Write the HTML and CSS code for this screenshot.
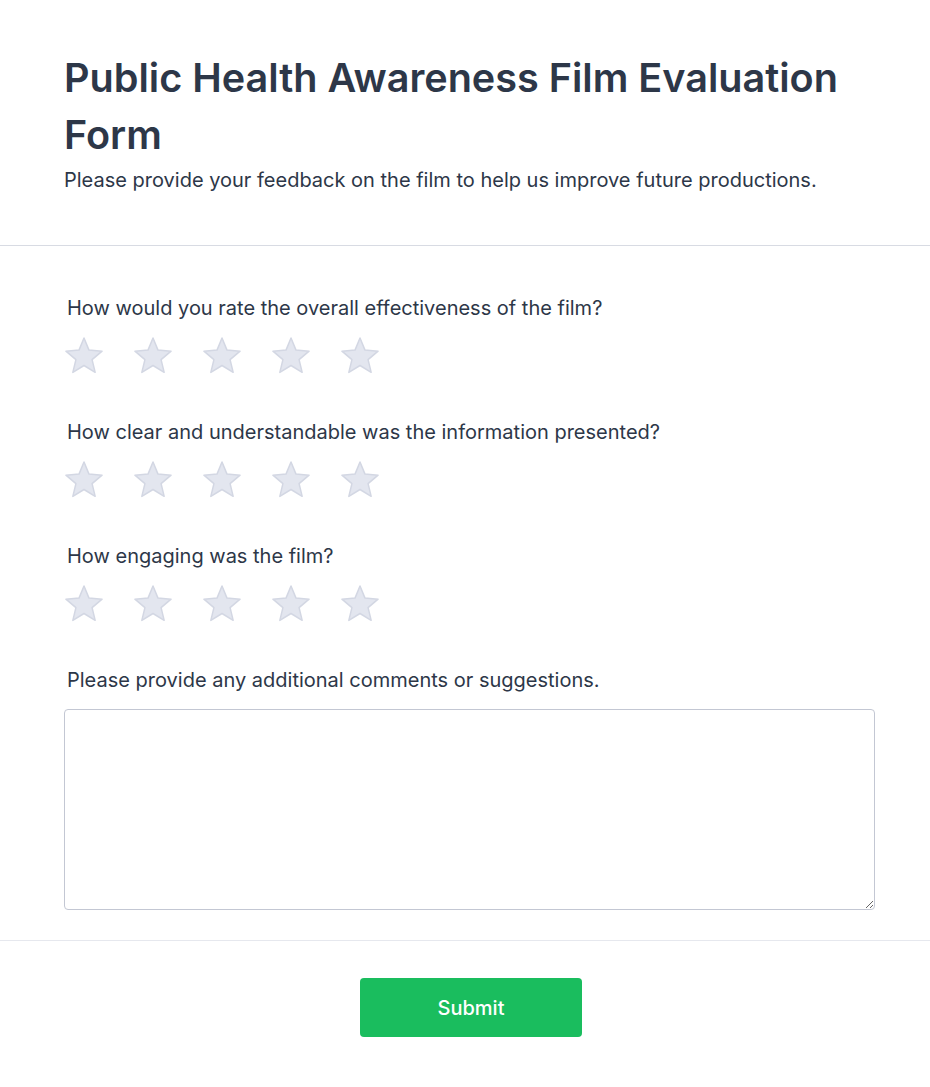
FILE: index.html
```html
<!DOCTYPE html>
<html lang="en">
<head>
<meta charset="utf-8">
<title>Public Health Awareness Film Evaluation Form</title>
<link rel="stylesheet" href="styles.css">
</head>
<body>
<div class="form">
  <header class="form-header">
    <h1 class="title">Public Health Awareness Film Evaluation Form</h1>
    <p class="subtitle">Please provide your feedback on the film to help us improve future productions.</p>
  </header>
  <main class="form-body">
    <div class="question">
      <label class="q-label">How would you rate the overall effectiveness of the film?</label>
      <div class="stars">
        <svg class="star" viewBox="0 0 40 40"><path d="M20 2L25 14.12L38.07 15.13L28.08 23.63L31.17 36.37L20 29.5L8.83 36.37L11.92 23.63L1.93 15.13L15 14.12Z"/></svg>
        <svg class="star" viewBox="0 0 40 40"><path d="M20 2L25 14.12L38.07 15.13L28.08 23.63L31.17 36.37L20 29.5L8.83 36.37L11.92 23.63L1.93 15.13L15 14.12Z"/></svg>
        <svg class="star" viewBox="0 0 40 40"><path d="M20 2L25 14.12L38.07 15.13L28.08 23.63L31.17 36.37L20 29.5L8.83 36.37L11.92 23.63L1.93 15.13L15 14.12Z"/></svg>
        <svg class="star" viewBox="0 0 40 40"><path d="M20 2L25 14.12L38.07 15.13L28.08 23.63L31.17 36.37L20 29.5L8.83 36.37L11.92 23.63L1.93 15.13L15 14.12Z"/></svg>
        <svg class="star" viewBox="0 0 40 40"><path d="M20 2L25 14.12L38.07 15.13L28.08 23.63L31.17 36.37L20 29.5L8.83 36.37L11.92 23.63L1.93 15.13L15 14.12Z"/></svg>
      </div>
    </div>
    <div class="question">
      <label class="q-label">How clear and understandable was the information presented?</label>
      <div class="stars">
        <svg class="star" viewBox="0 0 40 40"><path d="M20 2L25 14.12L38.07 15.13L28.08 23.63L31.17 36.37L20 29.5L8.83 36.37L11.92 23.63L1.93 15.13L15 14.12Z"/></svg>
        <svg class="star" viewBox="0 0 40 40"><path d="M20 2L25 14.12L38.07 15.13L28.08 23.63L31.17 36.37L20 29.5L8.83 36.37L11.92 23.63L1.93 15.13L15 14.12Z"/></svg>
        <svg class="star" viewBox="0 0 40 40"><path d="M20 2L25 14.12L38.07 15.13L28.08 23.63L31.17 36.37L20 29.5L8.83 36.37L11.92 23.63L1.93 15.13L15 14.12Z"/></svg>
        <svg class="star" viewBox="0 0 40 40"><path d="M20 2L25 14.12L38.07 15.13L28.08 23.63L31.17 36.37L20 29.5L8.83 36.37L11.92 23.63L1.93 15.13L15 14.12Z"/></svg>
        <svg class="star" viewBox="0 0 40 40"><path d="M20 2L25 14.12L38.07 15.13L28.08 23.63L31.17 36.37L20 29.5L8.83 36.37L11.92 23.63L1.93 15.13L15 14.12Z"/></svg>
      </div>
    </div>
    <div class="question">
      <label class="q-label">How engaging was the film?</label>
      <div class="stars">
        <svg class="star" viewBox="0 0 40 40"><path d="M20 2L25 14.12L38.07 15.13L28.08 23.63L31.17 36.37L20 29.5L8.83 36.37L11.92 23.63L1.93 15.13L15 14.12Z"/></svg>
        <svg class="star" viewBox="0 0 40 40"><path d="M20 2L25 14.12L38.07 15.13L28.08 23.63L31.17 36.37L20 29.5L8.83 36.37L11.92 23.63L1.93 15.13L15 14.12Z"/></svg>
        <svg class="star" viewBox="0 0 40 40"><path d="M20 2L25 14.12L38.07 15.13L28.08 23.63L31.17 36.37L20 29.5L8.83 36.37L11.92 23.63L1.93 15.13L15 14.12Z"/></svg>
        <svg class="star" viewBox="0 0 40 40"><path d="M20 2L25 14.12L38.07 15.13L28.08 23.63L31.17 36.37L20 29.5L8.83 36.37L11.92 23.63L1.93 15.13L15 14.12Z"/></svg>
        <svg class="star" viewBox="0 0 40 40"><path d="M20 2L25 14.12L38.07 15.13L28.08 23.63L31.17 36.37L20 29.5L8.83 36.37L11.92 23.63L1.93 15.13L15 14.12Z"/></svg>
      </div>
    </div>
    <div class="question">
      <label class="q-label" for="comments">Please provide any additional comments or suggestions.</label>
      <textarea id="comments" class="comments"></textarea>
    </div>
  </main>
  <footer class="form-footer">
    <button class="submit" type="button">Submit</button>
  </footer>
</div>
</body>
</html>
```
FILE: styles.css
```css
* { box-sizing: border-box; }
html, body { margin: 0; padding: 0; background: #ffffff; }
body {
  font-family: Inter, "Noto Sans", "Liberation Sans", sans-serif;
  color: #2d3748;
}
.form { width: 930px; }
.form-header {
  padding: 50px 64px 50px 64px;
  border-bottom: 1px solid #d8dbe3;
}
.title {
  margin: 0;
  font-size: 39.6px;
  font-weight: 600;
  line-height: 57px;
  color: #2d3748;
}
.subtitle {
  margin: 1px 0 0 0;
  font-size: 20px;
  font-weight: 400;
  line-height: 30px;
  color: #2d3748;
}
.form-body {
  padding: 47px 55px 30px 64px;
  border-bottom: 1px solid #e6e8ee;
}
.question { margin-bottom: 41px; }
.question:last-child { margin-bottom: 0; }
.q-label {
  display: block;
  padding-left: 3px;
  font-size: 20px;
  font-weight: 400;
  line-height: 30px;
  color: #2d3748;
}
.stars {
  display: flex;
  gap: 29px;
  margin-top: 13px;
}
.star {
  width: 40px;
  height: 40px;
  fill: #e3e6ef;
  stroke: #d3d7e3;
  stroke-width: 1.5;
  stroke-linejoin: round;
}
.comments {
  display: block;
  width: 100%;
  height: 201px;
  margin-top: 14px;
  border: 1px solid #c3c7d3;
  border-radius: 4px;
  font-family: inherit;
  font-size: 16px;
  resize: vertical;
}
.form-footer {
  display: flex;
  justify-content: center;
  padding: 37px 0 50px 12px;
}
.submit {
  width: 222px;
  height: 59px;
  border: none;
  border-radius: 4px;
  background: #1abd5e;
  color: #ffffff;
  font-family: inherit;
  font-size: 20px;
  font-weight: 500;
}
```
